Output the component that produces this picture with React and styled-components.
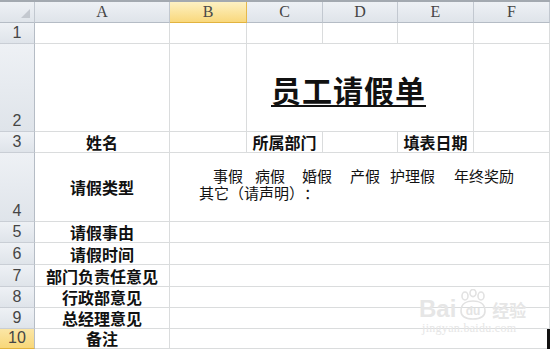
import React from "react";
import styled, { createGlobalStyle, css } from "styled-components";

const GlobalStyle = createGlobalStyle`
  html, body { margin: 0; padding: 0; background: #fff; overflow: hidden; }
  body {
    font-family: "Noto Sans CJK SC", "Liberation Sans", sans-serif;
    text-spacing-trim: space-all;
  }
`;

const Frame = styled.div`
  position: relative;
  width: 550px;
  height: 349px;
  overflow: hidden;
  border-top: 2px solid #a3a9b0;
  box-sizing: border-box;

  &::after {
    content: "";
    position: absolute;
    right: 0;
    bottom: 0;
    width: 3px;
    height: 20px;
    background: #111;
  }
`;

const Sheet = styled.div`
  display: grid;
  grid-template-columns: 35px 135px 77px 76px 75px 76px 76px;
  grid-template-rows: 21px 21px 88px 21px 69px 21px 22px 22px 21px 21px 20px;
`;

const headerBg = css`
  background: linear-gradient(#eef1f5, #dfe4ea);
  color: #3a3a3a;
  box-sizing: border-box;
`;

const Corner = styled.div`
  ${headerBg};
  border-right: 1px solid #c2c8d0;
  border-bottom: 1px solid #b5bcc5;
  display: flex;
  align-items: flex-end;
  justify-content: flex-end;
  padding: 0 4px 4px 0;
`;

const CornerTriangle = styled.span`
  width: 0;
  height: 0;
  border-left: 9px solid transparent;
  border-bottom: 9px solid #c3c8cf;
`;

const ColHeader = styled.div`
  ${headerBg};
  border-right: 1px solid #c2c8d0;
  border-bottom: 1px solid #b5bcc5;
  display: flex;
  align-items: center;
  justify-content: center;
  font-family: "Liberation Serif", "DejaVu Serif", serif;
  font-size: 16px;
  color: #444;
  ${(p) =>
    p.$selected &&
    css`
      background: linear-gradient(#fdf1c3, #f9d87c);
      border-right-color: #e6b94b;
      border-bottom-color: #e2b33f;
      color: #4a4a4a;
    `}
`;

const RowHeader = styled.div`
  ${headerBg};
  border-right: 1px solid #b5bcc5;
  border-bottom: 1px solid #c9ced5;
  display: flex;
  align-items: flex-end;
  justify-content: center;
  padding-bottom: 1px;
  font-family: "Liberation Sans", Arial, sans-serif;
  font-size: 16px;
  line-height: 18px;
  color: #454545;
  ${(p) =>
    p.$selected &&
    css`
      background: linear-gradient(#fbe6a6, #f8d779);
      border-bottom-color: #e2b33f;
    `}
`;

const Cell = styled.div`
  grid-column: span ${(p) => p.$span || 1};
  box-sizing: border-box;
  border-right: 1px solid #dadcdd;
  border-bottom: 1px solid #dadcdd;
  display: flex;
  align-items: ${(p) => p.$valign || "flex-end"};
  justify-content: center;
  font-size: 16px;
  font-weight: 700;
  line-height: 19px;
  color: #111;
  white-space: nowrap;
  overflow: visible;
`;

const TitleCell = styled(Cell)`
  align-items: flex-end;
  justify-content: flex-start;
  padding: 0 0 25px 24px;
`;

const Title = styled.span`
  font-size: 30px;
  font-weight: 700;
  line-height: 34px;
  letter-spacing: 1px;
  text-decoration: underline;
  text-decoration-thickness: 2px;
  text-underline-offset: 3px;
  color: #111;
`;

const TypesCell = styled(Cell)`
  flex-direction: column;
  align-items: flex-start;
  justify-content: flex-start;
  padding: 14px 0 0 29px;
  font-size: 15px;
  font-weight: 400;
  line-height: 17px;
`;

const TypesLine = styled.div`
  display: flex;
  padding-left: ${(p) => p.$indent || 0}px;
`;

const TypeItem = styled.span`
  margin-left: ${(p) => p.$gap || 0}px;
`;

const Watermark = styled.div`
  position: absolute;
  left: 419px;
  top: 287px;
  display: flex;
  flex-direction: column;
  align-items: flex-start;
  color: #e6e6e6;
  pointer-events: none;
`;

const MarkRow = styled.div`
  display: flex;
  align-items: flex-end;
  font-family: "Liberation Sans", Arial, sans-serif;
  font-size: 24px;
  font-weight: 700;
  line-height: 24px;
`;

const MarkCn = styled.span`
  font-family: "Noto Sans CJK SC", sans-serif;
  font-size: 17px;
  line-height: 22px;
  margin-left: 2px;
`;

const MarkUrl = styled.span`
  font-family: "Liberation Serif", serif;
  font-size: 12px;
  line-height: 14px;
  padding-left: 3px;
  letter-spacing: 0.3px;
`;

const cols = ["A", "B", "C", "D", "E", "F"];

const labels = ["请假事由", "请假时间", "部门负责任意见", "行政部意见", "总经理意见", "备注"];

const types = [
  { t: "事假", g: 0 },
  { t: "病假", g: 12 },
  { t: "婚假", g: 17 },
  { t: "产假", g: 18 },
  { t: "护理假", g: 10 },
  { t: "年终奖励", g: 19 },
];

function Paw() {
  return (
    <svg width="34" height="32" viewBox="0 0 34 32" fill="none" stroke="#e2e2e2" strokeWidth="1.6">
      <ellipse cx="9" cy="7" rx="3" ry="4" />
      <ellipse cx="17" cy="4" rx="3" ry="3.6" />
      <ellipse cx="25" cy="7" rx="3" ry="4" />
      <path d="M5 22 C5 14 12 12 17 12 C22 12 29 14 29 22 C29 29 22 30 17 30 C12 30 5 29 5 22 Z" />
      <text x="17" y="26" textAnchor="middle" fontFamily="Liberation Sans, sans-serif" fontSize="12" fontWeight="700" fill="#e4e4e4" stroke="none">du</text>
    </svg>
  );
}

export default function App() {
  return (
    <>
      <GlobalStyle />
      <Frame>
        <Sheet>
          <Corner>
            <CornerTriangle />
          </Corner>
          {cols.map((c) => (
            <ColHeader key={c} $selected={c === "B"}>
              {c}
            </ColHeader>
          ))}

          <RowHeader>1</RowHeader>
          {cols.map((c) => (
            <Cell key={c} />
          ))}

          <RowHeader>2</RowHeader>
          <Cell />
          <Cell />
          <TitleCell $span={3}>
            <Title>员工请假单</Title>
          </TitleCell>
          <Cell />

          <RowHeader>3</RowHeader>
          <Cell>姓名</Cell>
          <Cell />
          <Cell>所属部门</Cell>
          <Cell />
          <Cell>填表日期</Cell>
          <Cell />

          <RowHeader>4</RowHeader>
          <Cell $valign="center">请假类型</Cell>
          <TypesCell $span={5}>
            <TypesLine $indent={14}>
              {types.map((it) => (
                <TypeItem key={it.t} $gap={it.g}>
                  {it.t}
                </TypeItem>
              ))}
            </TypesLine>
            <TypesLine>其它（请声明）：</TypesLine>
          </TypesCell>

          {labels.map((l, i) => (
            <React.Fragment key={l}>
              <RowHeader $selected={i === 5}>{i + 5}</RowHeader>
              <Cell>{l}</Cell>
              <Cell $span={5} />
            </React.Fragment>
          ))}
        </Sheet>
        <Watermark>
          <MarkRow>
            Bai
            <Paw />
            <MarkCn>经验</MarkCn>
          </MarkRow>
          <MarkUrl>jingyan.baidu.com</MarkUrl>
        </Watermark>
      </Frame>
    </>
  );
}
